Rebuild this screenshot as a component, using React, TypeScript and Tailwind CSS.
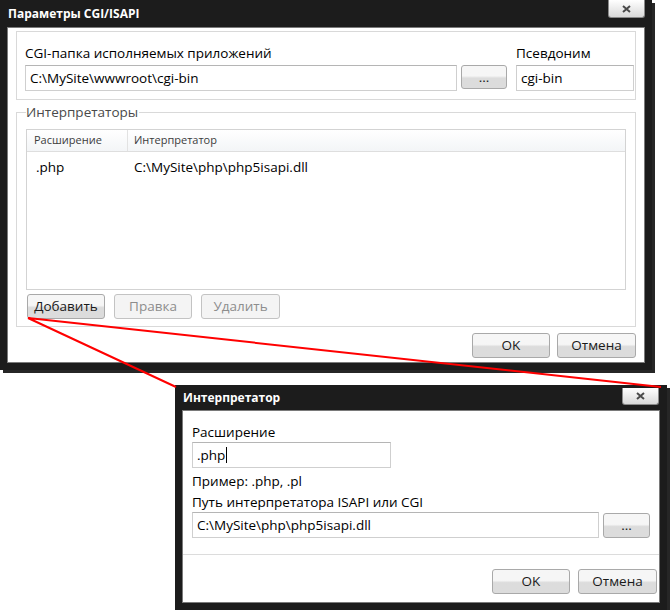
import type { ReactNode } from "react";

const ui = "font-['Open_Sans','Noto_Sans',sans-serif]";

const btn =
  "flex items-center justify-center rounded-[3px] border border-[#a9a9a9] bg-gradient-to-b from-[#f6f6f6] from-45% to-[#dcdcdc] to-55% text-[13.5px] text-[#1a1a1a]";
const btnOff =
  "flex items-center justify-center rounded-[3px] border border-[#c3c3c3] bg-[#f4f4f4] text-[13.5px] text-[#8d8d8d]";
const field =
  "flex items-center border border-[#cfcfcf] border-t-[#b5b5b5] bg-white px-1 text-[13.5px] text-black";

function CloseButton({ className }: { className: string }) {
  return (
    <div
      className={`absolute flex items-center justify-center rounded-b-[3px] border border-t-0 border-[#8a8a8a] bg-gradient-to-b from-[#ffffff] to-[#d9d9d9] ${className}`}
    >
      <svg width="9" height="8" viewBox="0 0 9 8">
        <path d="M1 1 L8 7 M8 1 L1 7" stroke="#4a4a4a" strokeWidth="2" />
      </svg>
    </div>
  );
}

function Window({
  title,
  className,
  titleH,
  children,
  closeClass
}: {
  title: string;
  className: string;
  titleH: string;
  children: ReactNode;
  closeClass: string;
}) {
  return (
    <div
      className={`relative flex flex-col bg-[#1c1c1c] px-[7px] pb-[7px] shadow-[3px_3px_0_#262626] ${className}`}
    >
      <div className={`flex items-center pl-px text-[12px] font-bold text-white ${titleH}`}>
        {title}
      </div>
      <CloseButton className={closeClass} />
      <div className="flex flex-1 flex-col border border-[#7a7a7a] bg-white">{children}</div>
    </div>
  );
}

export default function App() {
  return (
    <div className={`relative h-[610px] w-[670px] overflow-hidden bg-white ${ui}`}>
      <Window
        title="Параметры CGI/ISAPI"
        className="h-[370px] w-[652px]"
        titleH="h-[27px]"
        closeClass="left-[608px] top-0 h-[18px] w-[37px]"
      >
        {/* top group */}
        <div className="mx-[8px] mt-[3px] flex h-[69px] gap-[4px] border border-[#d9d9d9] px-[8px] pt-[11px]">
          <div className="flex flex-col">
            <span className="h-[22px] text-[13.5px] leading-[20px] text-black">
              CGI-папка исполняемых приложений
            </span>
            <div className={`${field} h-[26px] w-[432px]`}>C:\MySite\wwwroot\cgi-bin</div>
          </div>
          <div className="flex flex-col pt-[22px]">
            <div className={`${btn} h-[24px] w-[46px] text-[11px]`}>...</div>
          </div>
          <div className="ml-[5px] flex flex-col">
            <span className="h-[22px] text-[13.5px] leading-[20px] text-black">Псевдоним</span>
            <div className={`${field} h-[26px] w-[118px]`}>cgi-bin</div>
          </div>
        </div>

        {/* interpreters group */}
        <div className="relative mx-[8px] mt-[12px] h-[215px] border border-[#d9d9d9] px-[9px] pt-[16px]">
          <span className="absolute -top-[10px] left-[9px] bg-white pr-px text-[13.5px] leading-[18px] text-[#4a4a4a]">
            Интерпретаторы
          </span>
          <div className="flex h-[161px] flex-col border border-[#d3d3d3]">
            <div className="flex h-[22px] border-b border-[#dedede] bg-gradient-to-b from-white to-[#f3f5f7] text-[11px] text-[#3c3c3c]">
              <div className="flex w-[101px] items-center border-r border-[#e2e2e2] pl-[7px]">
                Расширение
              </div>
              <div className="flex flex-1 items-center pl-[6px]">Интерпретатор</div>
            </div>
            <div className="flex h-[30px] items-center text-[13.5px] text-black">
              <span className="w-[107px] pl-[9px]">.php</span>
              <span>C:\MySite\php\php5isapi.dll</span>
            </div>
          </div>
          <div className="mt-[4px] flex gap-[9px] pl-px">
            <div className={`${btn} h-[25px] w-[78px]`}>Добавить</div>
            <div className={`${btnOff} h-[25px] w-[78px]`}>Правка</div>
            <div className={`${btnOff} h-[25px] w-[79px]`}>Удалить</div>
          </div>
        </div>

        <div className="mt-[6px] flex justify-end gap-[7px] pr-[8px]">
          <div className={`${btn} h-[25px] w-[78px]`}>OK</div>
          <div className={`${btn} h-[25px] w-[79px]`}>Отмена</div>
        </div>
      </Window>

      <Window
        title="Интерпретатор"
        className="ml-[175px] mt-[15px] h-[225px] w-[492px]"
        titleH="h-[25px]"
        closeClass="left-[447px] top-[3px] h-[17px] w-[37px]"
      >
        <div className="flex h-[144px] flex-col border-b border-[#dcdcdc] px-[9px] pt-[11px]">
          <span className="h-[20px] text-[13.5px] leading-[20px] text-black">Расширение</span>
          <div className={`${field} h-[26px] w-[199px]`}>
            .php<span className="ml-px h-[16px] w-px bg-black" />
          </div>
          <span className="mt-[3px] h-[21px] text-[13.5px] leading-[20px] text-black">
            Пример: .php, .pl
          </span>
          <span className="h-[20px] text-[13.5px] leading-[20px] text-black">
            Путь интерпретатора ISAPI или CGI
          </span>
          <div className="flex gap-[4px]">
            <div className={`${field} h-[26px] w-[407px]`}>C:\MySite\php\php5isapi.dll</div>
            <div className={`${btn} mt-px h-[25px] w-[47px] text-[11px]`}>...</div>
          </div>
        </div>
        <div className="mt-[14px] flex justify-end gap-[8px] pr-[2px]">
          <div className={`${btn} h-[25px] w-[78px]`}>OK</div>
          <div className={`${btn} h-[25px] w-[79px]`}>Отмена</div>
        </div>
      </Window>

      <svg
        className="pointer-events-none absolute left-0 top-0"
        width="670"
        height="610"
        viewBox="0 0 670 610"
      >
        <path d="M28 318 L176 387 M28 318 L661 387" stroke="#ff0000" strokeWidth="2" fill="none" />
      </svg>
    </div>
  );
}
